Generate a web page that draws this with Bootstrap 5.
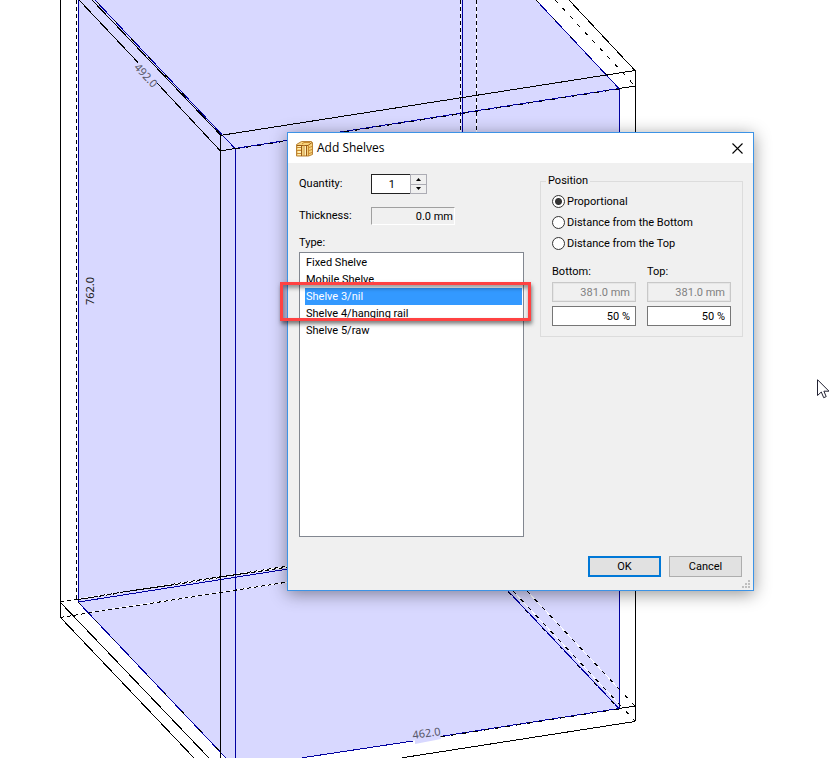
<!DOCTYPE html>
<html lang="en">
<head>
<meta charset="utf-8">
<meta name="viewport" content="width=device-width, initial-scale=1">
<title>Add Shelves</title>
<link rel="stylesheet" href="https://cdn.jsdelivr.net/npm/bootstrap@5.3.0/dist/css/bootstrap.min.css">
<style>
  body { font-family: Tahoma, Roboto, "Noto Sans", sans-serif; font-size: 11px; line-height: 16px; color: #000; background: #fff; }
  .drawing { inset: 0; }
  .drawing text { font-family: "Noto Sans", sans-serif; font-size: 11px; fill: #555566; text-anchor: middle; }
  .drawing .upright { fill: #222; }
  .dialog { left: 287px; top: 132px; width: 467px; background: #f0f0f0; border: 1px solid #3c93e6; box-shadow: 0 3px 16px rgba(0,0,0,.42); }
  .titlebar { height: 30px; padding: 0 8px; }
  .titlebar h1 { font-family: "Segoe UI", "Open Sans", sans-serif; font-size: 12px; line-height: 16px; font-weight: 400; }
  .close-btn { width: 15px; height: 15px; }
  .dialog-body { padding: 10px 10px 13px 11px; }
  .columns { gap: 16px; }
  .col-left { width: 225px; padding-top: 1px; }
  .field-row { grid-template-columns: 72px auto; justify-content: start; align-items: center; }
  .field-row + .field-row { margin-top: 13px; }
  .type-label { margin: 10px 0 1px; }
  .box { height: 20px; border: 1px solid #767676; border-radius: 0; padding: 0 5px; font-size: 11px; line-height: 16px; text-align: right; color: #000; background: #fff; }
  .box:disabled { color: #808080; border-color: #c8c8c8; background: #f0f0f0; box-shadow: inset 0 0 0 1px #e6e6e6; }
  .qty { width: 39px; border-color: #222; border-right: 0; padding: 0 15px 0 0; }
  .spinner { width: 17px; height: 20px; border: 1px solid #acacb4; background: #acacb4; gap: 1px; }
  .spinner button { height: 9px; background: #f0f0f0; color: #000; }
  .thick { width: 84px; height: 18px; border-color: #a0a0a0 #fff #fff #a0a0a0; padding: 0 1px 0 0; background: #f0f0f0; }
  .types { height: 285px; background: #fff; border: 1px solid #828790; border-radius: 0; padding: 1px 1px 1px 5px; }
  .types button { height: 17px; padding: 0 1px; border: 0; font-size: 11px; line-height: 17px; color: #000; background: #fff; }
  .types button.active { background: #3399ff; color: #fff; }
  .position { border: 1px solid #dcdcdc; padding: 2px 11px 10px; }
  .position legend { float: none; width: auto; font-size: 11px; line-height: 16px; margin: 0 0 0 -6px; padding: 0 2px; }
  .option-row { height: 21px; gap: 2px; }
  .option-row input { appearance: none; width: 13px; height: 13px; margin: 0; border: 1px solid #333; border-radius: 50%; background: #fff; }
  .option-row input:checked { background: radial-gradient(circle, #333 0 3px, #fff 4px); }
  .distances { display: grid; grid-template-columns: 1fr 1fr; column-gap: 11px; margin-top: 10px; }
  .distances .box { width: 100%; margin-top: 2px; }
  .distances .box + .box { margin-top: 4px; }
  .actions { margin-top: 19px; gap: 8px; padding-right: 1px; }
  .action { width: 73px; height: 21px; padding: 0; border: 1px solid #adadad; border-radius: 0; background: #e1e1e1; font-size: 11px; line-height: 16px; color: #000; }
  .action.primary { border: 2px solid #0078d7; }
  .highlight { left: -8px; top: 149px; width: 251px; height: 39px; border: 3px solid #ff4242; box-shadow: 1px 3px 4px rgba(0,0,0,.5), inset 1px 3px 4px rgba(0,0,0,.4); }
  .grip { right: 3px; bottom: 2px; }
  .pointer { left: 817px; top: 379px; }
</style>
<script src="https://cdn.jsdelivr.net/npm/bootstrap@5.3.0/dist/js/bootstrap.bundle.min.js"></script>
</head>
<body>
<main class="position-relative vh-100 overflow-hidden">
  <svg class="drawing position-absolute w-100 h-100" viewBox="0 0 829 758" preserveAspectRatio="xMinYMin slice" fill="none" aria-label="Cabinet drawing">
    <path fill="#d8d8ff" d="M78 0V602L226 758H302L619 708V88L536 0Z"/>
    <g shape-rendering="crispEdges">
      <g stroke="#fff">
        <path d="M476.500 0V132M60 602L288 566M78 599L288 567M60 617L288 582M513 591L635 721M527 591L635 706M76.500 0V600M460.500 0V132"/>
      </g>
      <g stroke="#0000a0">
        <path d="M78.500 0V602L288 569M78 602L226 758M95 0L235 148.500L619 88.500L536 0M235.500 148V758M462.500 0V132M619.500 88V708M508 591L619 708.500L440 736.500M413 741L302 757.800"/>
      </g>
      <g stroke="#000">
        <path d="M60.500 0V617M79 0L138 62.500M157 83L220 150.500M92 0L221 135.500M220.500 135V758M220 135.500L635 70.500M635.500 70V721M635 721.500L402 757.800M220 151L235 148.500M619 88.500L635 86M569 0L635 70.500M60 602L209 758M60 617L194 758M619 708.500L635 706"/>
        <path stroke-dasharray="4 3" d="M76.500 0V600M460.500 0V132M476.500 0V132M60 602L288 566M78 599.500L288 567M60 617.500L288 582"/>
        <path stroke-dasharray="4 7" d="M555 0L635 86M513 591L635 721M527 591L635 706"/>
        <path stroke-dasharray="5 6" d="M235 149L619 89M619 709L440 737"/>
        <path stroke-dasharray="4 21" d="M97 2L233 147M536 0L619 88M78 602L226 758M508 592L619 709"/>
      </g>
    </g>
    <path fill="#d8d8ff" d="M415 738L440 734L441 739L415 744Z"/>
    <text transform="translate(143 78) rotate(47)">492.0</text>
    <text class="upright" transform="translate(94 291) rotate(-90)">762.0</text>
    <text transform="translate(427 737) rotate(-8)">462.0</text>
  </svg>

  <section class="dialog position-absolute" role="dialog" aria-labelledby="dialog-title">
    <header class="titlebar d-flex align-items-center bg-white">
      <svg width="17" height="17" viewBox="0 0 17 17" aria-hidden="true">
        <path fill="#f6d27c" stroke="#b98236" d="M.5 4.500L5.500 1.500H15.500L16.500 2.500V14.500L12.500 16H.5Z"/>
        <path fill="#fff0b8" d="M2 6h3v3H2zM2 11h3v4H2zM7 6h3v9H7z"/>
        <path fill="none" stroke="#9b5c17" d="M1 5.500H12L16 2.500M5.500 5V16M10.500 5V16"/>
        <path stroke="#c98a31" fill="none" d="M6 4L8 2.500H14M12.500 5V16M1 10.500H5M1 7.500H5M1 13.500H5M13 7.500L16 6.500M13 10.500L16 9.500M13 13.500L16 12.500M8 5V16"/>
      </svg>
      <h1 id="dialog-title" class="mb-0 ms-1 flex-grow-1">Add Shelves</h1>
      <button type="button" class="close-btn btn p-0 border-0 d-flex align-items-center justify-content-center" aria-label="Close">
        <svg width="11" height="11" viewBox="0 0 11 11" stroke="#000" stroke-width="1.100"><path d="M.5.5L10.500 10.500M10.500.5L.5 10.500"/></svg>
      </button>
    </header>

    <form class="dialog-body">
      <div class="columns d-flex align-items-start">
        <div class="col-left d-flex flex-column flex-shrink-0">
          <div class="field-row d-grid">
            <label for="qty">Quantity:</label>
            <div class="d-flex">
              <input id="qty" class="box qty" type="text" value="1">
              <div class="spinner d-flex flex-column">
                <button type="button" class="border-0 p-0 d-flex align-items-center justify-content-center" aria-label="Increase"><svg width="5" height="3" viewBox="0 0 5 3"><path d="M0 3L2.500 0L5 3Z"/></svg></button>
                <button type="button" class="border-0 p-0 d-flex align-items-center justify-content-center" aria-label="Decrease"><svg width="5" height="3" viewBox="0 0 5 3"><path d="M0 0L2.500 3L5 0Z"/></svg></button>
              </div>
            </div>
          </div>
          <div class="field-row d-grid">
            <label for="thickness">Thickness:</label>
            <input id="thickness" class="box thick" type="text" value="0.0 mm" readonly>
          </div>
          <div id="type-label" class="type-label">Type:</div>
          <div class="types list-group" role="listbox" aria-labelledby="type-label">
            <button type="button" role="option" class="text-start">Fixed Shelve</button>
            <button type="button" role="option" class="text-start">Mobile Shelve</button>
            <button type="button" role="option" class="text-start active" aria-selected="true">Shelve 3/nil</button>
            <button type="button" role="option" class="text-start">Shelve 4/hanging rail</button>
            <button type="button" role="option" class="text-start">Shelve 5/raw</button>
          </div>
        </div>

        <fieldset class="position flex-grow-1">
          <legend>Position</legend>
          <div class="option-row d-flex align-items-center"><input type="radio" name="pos" id="pos-prop" checked><label for="pos-prop">Proportional</label></div>
          <div class="option-row d-flex align-items-center"><input type="radio" name="pos" id="pos-bottom"><label for="pos-bottom">Distance from the Bottom</label></div>
          <div class="option-row d-flex align-items-center"><input type="radio" name="pos" id="pos-top"><label for="pos-top">Distance from the Top</label></div>
          <div class="distances">
            <div class="d-flex flex-column">
              <label for="bottom-mm">Bottom:</label>
              <input id="bottom-mm" class="box" type="text" value="381.0 mm" disabled>
              <input class="box" type="text" value="50 %" aria-label="Bottom percent">
            </div>
            <div class="d-flex flex-column">
              <label for="top-mm">Top:</label>
              <input id="top-mm" class="box" type="text" value="381.0 mm" disabled>
              <input class="box" type="text" value="50 %" aria-label="Top percent">
            </div>
          </div>
        </fieldset>
      </div>
      <div class="actions d-flex justify-content-end">
        <button type="submit" class="action primary">OK</button>
        <button type="button" class="action">Cancel</button>
      </div>
    </form>

    <div class="highlight position-absolute pe-none"></div>
    <svg class="grip position-absolute" width="8" height="8" fill="#bfbfbf" aria-hidden="true"><path d="M6 0h2v2H6zM3 3h2v2H3zM6 3h2v2H6zM0 6h2v2H0zM3 6h2v2H3zM6 6h2v2H6z"/></svg>
  </section>

  <svg class="pointer position-absolute" width="13" height="20" viewBox="0 0 13 20" aria-hidden="true"><path fill="#fff" stroke="#223" d="M.5.700V16.500L4.300 13L6.700 18.700L9.200 17.600L6.900 12.200H12Z"/></svg>
</main>
</body>
</html>
